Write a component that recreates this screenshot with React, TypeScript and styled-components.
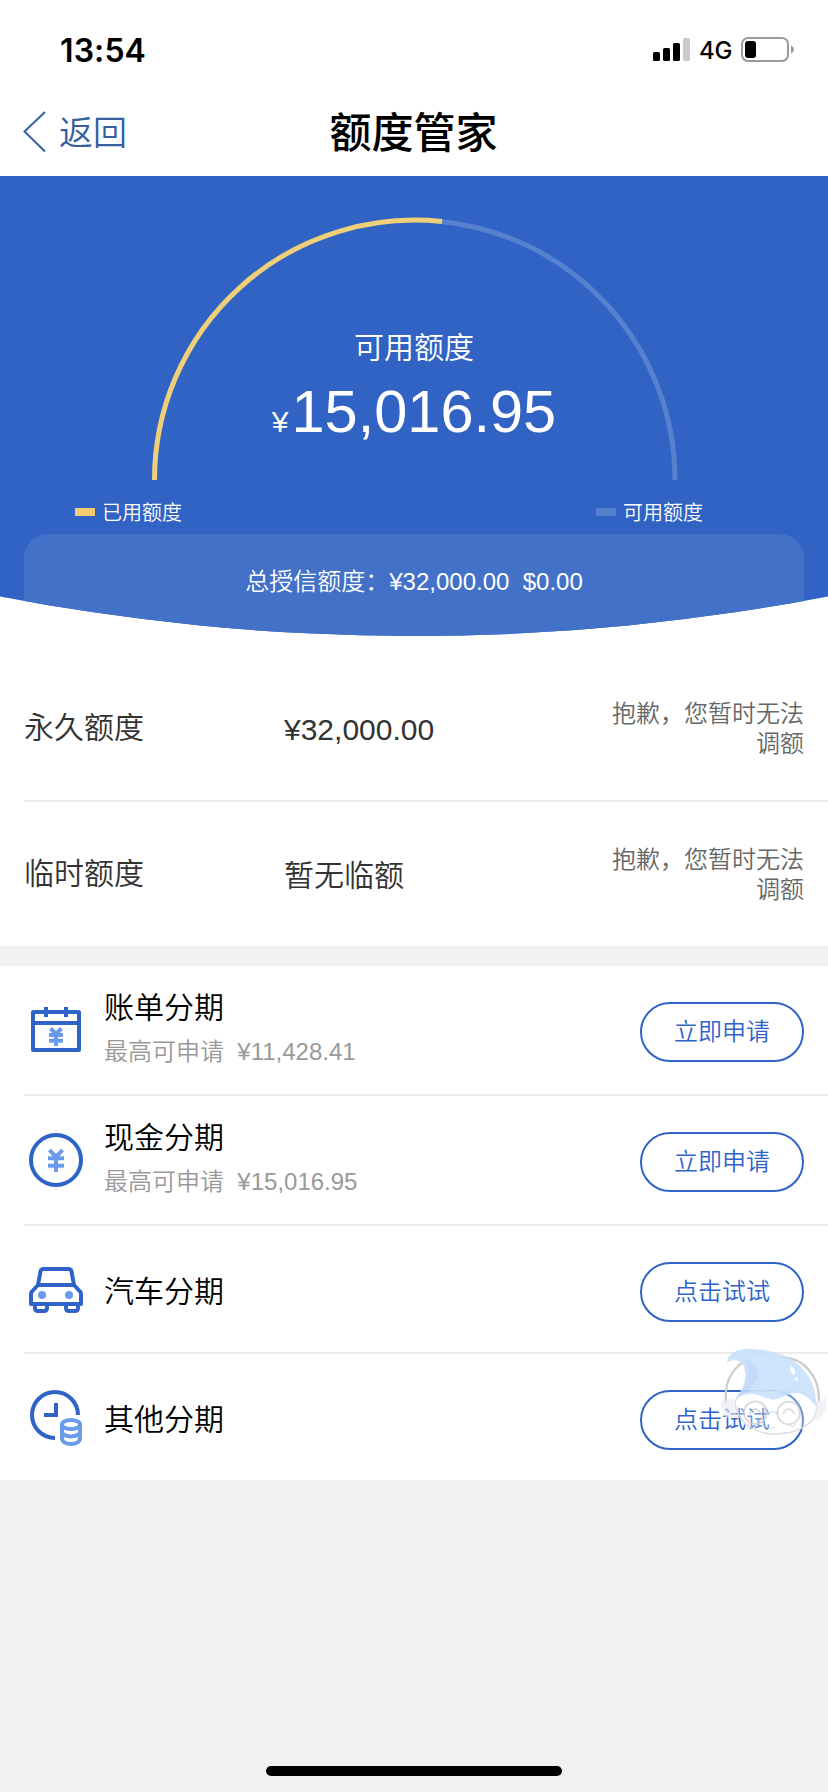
import React from "react";
import styled, { createGlobalStyle } from "styled-components";

const BLUE = "#2f63c8";
const LIGHT_BLUE = "#6a9aec";

const GlobalStyle = createGlobalStyle`
  * { box-sizing: border-box; }
  body {
    margin: 0;
    background: #f1f1f1;
    font-family: "Liberation Sans", "Noto Sans CJK SC", sans-serif;
    font-weight: 350;
    color: #000;
  }
`;

const Screen = styled.div`
  width: 828px;
  height: 1792px;
  display: flex;
  flex-direction: column;
  position: relative;
  overflow: hidden;
  background: #f1f1f1;
`;

const StatusBar = styled.header`
  height: 88px;
  flex: none;
  padding: 12px 33px 0 60px;
  display: flex;
  align-items: center;
  justify-content: space-between;
  background: #fff;
  font-family: Inter, sans-serif;
`;

const Clock = styled.span`
  padding-top: 1px;
  font-size: 32px;
  font-weight: 600;
  line-height: 40px;
  letter-spacing: 0.1px;
`;

const StatusIcons = styled.div`
  display: flex;
  align-items: center;
`;

const Network = styled.span`
  margin: 2px 9px 0 8px;
  font-size: 24px;
  font-weight: 500;
  line-height: 30px;
  letter-spacing: -0.4px;
`;

const NavBar = styled.nav`
  height: 88px;
  flex: none;
  padding: 0 24px 0 23px;
  display: grid;
  grid-template-columns: 1fr auto 1fr;
  align-items: center;
  background: #fff;
`;

const BackLink = styled.a`
  display: flex;
  align-items: center;
  gap: 13px;
  color: #355f9f;
  font-size: 34px;
  line-height: 44px;
`;

const BackLabel = styled.span`
  padding-top: 2px;
`;

const Title = styled.h1`
  margin: 0;
  padding-top: 4px;
  font-size: 42px;
  font-weight: 500;
  line-height: 54px;
`;

const HeroBackdrop = styled.div`
  flex: none;
  background: #fff;
`;

const Hero = styled.section`
  height: 460px;
  padding-top: 41px;
  background: #3163c4;
  color: #fff;
  clip-path: circle(2184px at 50% -1724px);
`;

const Gauge = styled.div`
  height: 263px;
  display: grid;
  justify-items: center;
  > * { grid-area: 1 / 1; }
`;

const GaugeText = styled.div`
  padding-top: 111px;
  text-align: center;
`;

const GaugeLabel = styled.div`
  font-size: 30px;
  line-height: 40px;
`;

const Amount = styled.div`
  margin-top: 9px;
  font-size: 59.5px;
  line-height: 70px;
`;

const Currency = styled.span`
  font-size: 30px;
  margin-right: 3px;
`;

const Legend = styled.div`
  height: 54px;
  padding: 19px 125px 0 75px;
  display: flex;
  justify-content: space-between;
  font-size: 20px;
  line-height: 28px;
`;

const LegendItem = styled.div<{ $color: string }>`
  height: 28px;
  display: flex;
  align-items: center;
  gap: 7px;
  &::before {
    content: "";
    width: 20px;
    height: 8px;
    margin-bottom: 2px;
    background: ${(p) => p.$color};
  }
`;

const TotalCard = styled.div`
  height: 110px;
  margin: 0 24px;
  padding-top: 32px;
  border-radius: 24px 24px 0 0;
  background: #4271c7;
  text-align: center;
  font-size: 24px;
  line-height: 32px;
  white-space: pre;
`;

const Limits = styled.section`
  height: 310px;
  flex: none;
  padding: 20px 0 0 24px;
  background: #fff;
  color: #333;
`;

const LimitRow = styled.div`
  height: 146px;
  padding-right: 24px;
  display: grid;
  grid-template-columns: 260px 1fr 200px;
  align-items: center;
  border-bottom: 2px solid #ebebeb;
  font-size: 30px;
  line-height: 40px;
  &:last-child { height: 144px; border-bottom: 0; }
`;

const LimitValue = styled.span`
  padding-top: 3px;
`;

const LimitNote = styled.span`
  padding-top: 2px;
  color: #666;
  font-size: 24px;
  line-height: 30px;
  text-align: right;
`;

const Plans = styled.section`
  margin-top: 20px;
  padding-left: 24px;
  flex: none;
  background: #fff;
`;

const PlanRow = styled.div<{ $height: number }>`
  height: ${(p) => p.$height}px;
  padding: 0 24px 0 4px;
  display: flex;
  align-items: flex-start;
  border-bottom: 2px solid #ebebeb;
  &:last-child { border-bottom: 0; }
`;

const IconSlot = styled.div`
  width: 56px;
  height: 60px;
  margin: 34px 20px 0 0;
`;

const PlanText = styled.div<{ $single: boolean }>`
  flex: 1;
  padding-top: ${(p) => (p.$single ? 46 : 22)}px;
`;

const PlanName = styled.div`
  font-size: 30px;
  line-height: 40px;
`;

const PlanHint = styled.div`
  margin-top: 8px;
  color: #999;
  font-size: 24px;
  line-height: 32px;
  white-space: pre;
`;

const PlanButton = styled.button`
  width: 164px;
  height: 60px;
  margin-top: 36px;
  padding: 0 0 6px;
  border: 2px solid ${BLUE};
  border-radius: 30px;
  background: transparent;
  color: ${BLUE};
  font: inherit;
  font-size: 24px;
`;

const Mascot = styled.svg`
  position: absolute;
  left: 718px;
  top: 1346px;
`;

const HomeIndicator = styled.div`
  width: 296px;
  height: 10px;
  margin: auto auto 16px;
  border-radius: 5px;
  background: #000;
`;

const Yen = ({ x, y, w, h }: { x: number; y: number; w: number; h: number }) => (
  <g transform={`translate(${x} ${y})`} stroke={LIGHT_BLUE} strokeWidth="4" fill="none">
    <path d={`M${1.5} 1.5L${w / 2} ${h * 0.36}L${w - 1.5} 1.5M${w / 2} ${h * 0.3}V${h}M0 ${h * 0.42}H${w}M0 ${h * 0.73}H${w}`} />
  </g>
);

const CalendarIcon = () => (
  <svg width="56" height="60" viewBox="0 0 56 60" fill="none" stroke={BLUE} strokeWidth="4">
    <rect x="5" y="12" width="46" height="38" rx="0.5" />
    <path d="M5 23H51M18 7V17M38 7V17" />
    <Yen x={21} y={27} w={14} h={19} />
  </svg>
);

const CashIcon = () => (
  <svg width="56" height="60" viewBox="0 0 56 60" fill="none" stroke={BLUE} strokeWidth="4">
    <circle cx="28" cy="30" r="25" />
    <Yen x={20} y={18.5} w={16} h={23.5} />
  </svg>
);

const CarIcon = () => (
  <svg width="56" height="60" viewBox="0 0 56 60" fill="none" stroke={BLUE} strokeWidth="4" strokeLinejoin="round">
    <path d="M10 25L12.500 11.500Q13 9 15.500 9H40.500Q43 9 43.500 11.500L46 25M10 25H46L52 31.500Q53 32.500 53 34V44H3V34Q3 32.500 4 31.500Z" />
    <path d="M7 44V48Q7 51 10 51H16Q19 51 19 48V44M38 44V48Q38 51 41 51H47Q50 51 50 48V44" />
    <circle cx="14" cy="35" r="4" fill={LIGHT_BLUE} stroke="none" />
    <circle cx="41" cy="35" r="4" fill={LIGHT_BLUE} stroke="none" />
  </svg>
);

const ClockCoinsIcon = () => (
  <svg width="56" height="60" viewBox="0 0 56 60" fill="none" stroke={BLUE} strokeWidth="4">
    <path d="M50 27A23 23 0 1 0 27 50" />
    <path d="M28 15V27H16" />
    <g stroke={LIGHT_BLUE}>
      <ellipse cx="43" cy="36.5" rx="9" ry="4.5" />
      <path d="M34 37V50C34 58 52 58 52 50V37M34 43.500C34 50 52 50 52 43.500" />
    </g>
  </svg>
);

const plans = [
  { name: "账单分期", hint: "最高可申请  ¥11,428.41", action: "立即申请", height: 130, icon: <CalendarIcon /> },
  { name: "现金分期", hint: "最高可申请  ¥15,016.95", action: "立即申请", height: 130, icon: <CashIcon /> },
  { name: "汽车分期", action: "点击试试", height: 128, icon: <CarIcon /> },
  { name: "其他分期", action: "点击试试", height: 126, icon: <ClockCoinsIcon /> },
];

const limits = [
  { name: "永久额度", value: "¥32,000.00" },
  { name: "临时额度", value: "暂无临额" },
];

export default function App() {
  return (
    <Screen>
      <GlobalStyle />
      <StatusBar>
        <Clock>13:54</Clock>
        <StatusIcons>
          <svg width="38" height="24" viewBox="0 0 38 24">
            <rect x="0" y="14" width="7" height="9" rx="1.5" />
            <rect x="10" y="10" width="7" height="13" rx="1.5" />
            <rect x="20" y="5" width="7" height="18" rx="1.5" />
            <rect x="30" y="0" width="7" height="23" rx="1.5" fill="#cacaca" />
          </svg>
          <Network>4G</Network>
          <svg width="54" height="26" viewBox="0 0 54 26">
            <rect x="1" y="1" width="46" height="23" rx="6" fill="none" stroke="#999" strokeWidth="2" />
            <rect x="4" y="4" width="11" height="17" rx="3" />
            <path d="M50 8.500Q53 10 53 12.500T50 16.500Z" fill="#999" />
          </svg>
        </StatusIcons>
      </StatusBar>

      <NavBar>
        <BackLink>
          <svg width="23" height="42" viewBox="0 0 23 42" fill="none" stroke="#355f9f" strokeWidth="2">
            <path d="M22 1L1.500 20.500L22 40.500" />
          </svg>
          <BackLabel>返回</BackLabel>
        </BackLink>
        <Title>额度管家</Title>
      </NavBar>

      <HeroBackdrop>
        <Hero>
          <Gauge>
            <svg width="530" height="263" viewBox="0 0 530 263" fill="none" strokeWidth="5">
              <path d="M292 4.400A260.250 260 0 0 1 526 263" stroke="#5581cf" />
              <path d="M5.500 263A260.250 260 0 0 1 293 4.500" stroke="#efcf77" />
            </svg>
            <GaugeText>
              <GaugeLabel>可用额度</GaugeLabel>
              <Amount>
                <Currency>¥</Currency>15,016.95
              </Amount>
            </GaugeText>
          </Gauge>
          <Legend>
            <LegendItem $color="#f2cc70">已用额度</LegendItem>
            <LegendItem $color="#5581cf">可用额度</LegendItem>
          </Legend>
          <TotalCard>总授信额度：¥32,000.00  $0.00</TotalCard>
        </Hero>
      </HeroBackdrop>

      <Limits>
        {limits.map((l) => (
          <LimitRow key={l.name}>
            <span>{l.name}</span>
            <LimitValue>{l.value}</LimitValue>
            <LimitNote>抱歉，您暂时无法调额</LimitNote>
          </LimitRow>
        ))}
      </Limits>

      <Plans>
        {plans.map((p) => (
          <PlanRow key={p.name} $height={p.height}>
            <IconSlot>{p.icon}</IconSlot>
            <PlanText $single={!p.hint}>
              <PlanName>{p.name}</PlanName>
              {p.hint && <PlanHint>{p.hint}</PlanHint>}
            </PlanText>
            <PlanButton>{p.action}</PlanButton>
          </PlanRow>
        ))}
      </Plans>

      <Mascot width="110" height="94" viewBox="54 48 330 282" fill="none">
        <path d="M105 218C112 190 150 178 220 185C290 178 350 190 350 235C346 285 290 312 222 312C165 310 112 280 105 218Z" fill="#fff" fillOpacity="0.3" stroke="#dcdcdc" strokeWidth="4" />
        <path d="M78 218C72 160 95 118 130 96M245 82C310 82 362 140 356 215" stroke="#cdcdcd" strokeWidth="7" />
        <path d="M64 210L100 206L112 262L78 264Q60 245 64 210Z" fill="#e9eaf2" fillOpacity="0.6" />
        <path d="M352 212L378 204Q386 240 356 270L340 268Z" fill="#e9eaf2" fillOpacity="0.6" />
        <path d="M82 98C80 68 118 54 160 57C260 62 345 108 350 228C338 222 330 202 305 192C270 180 250 207 218 209C185 205 170 178 108 202C132 175 143 140 130 106C116 86 97 88 82 98Z" fill="#c5dffc" fillOpacity="0.85" />
        <path d="M130 88C155 115 150 160 114 196Q145 190 170 150Q185 105 130 88Z" fill="#aecdf4" fillOpacity="0.4" />
        <ellipse cx="278" cy="122" rx="6" ry="12" transform="rotate(-25 278 122)" fill="#fff" />
        <circle cx="289" cy="147" r="5" fill="#fff" />
        <g stroke="#c8cbd1" strokeOpacity="0.75" strokeWidth="5">
          <circle cx="166" cy="248" r="34" />
          <circle cx="266" cy="249" r="34" />
          <path d="M200 250Q216 241 232 250M148 252Q166 222 184 252M248 252Q266 222 284 252" strokeWidth="4" />
          <path d="M205 293Q214 298 224 292M268 284Q278 297 288 280" strokeWidth="3" />
        </g>
      </Mascot>

      <HomeIndicator />
    </Screen>
  );
}
